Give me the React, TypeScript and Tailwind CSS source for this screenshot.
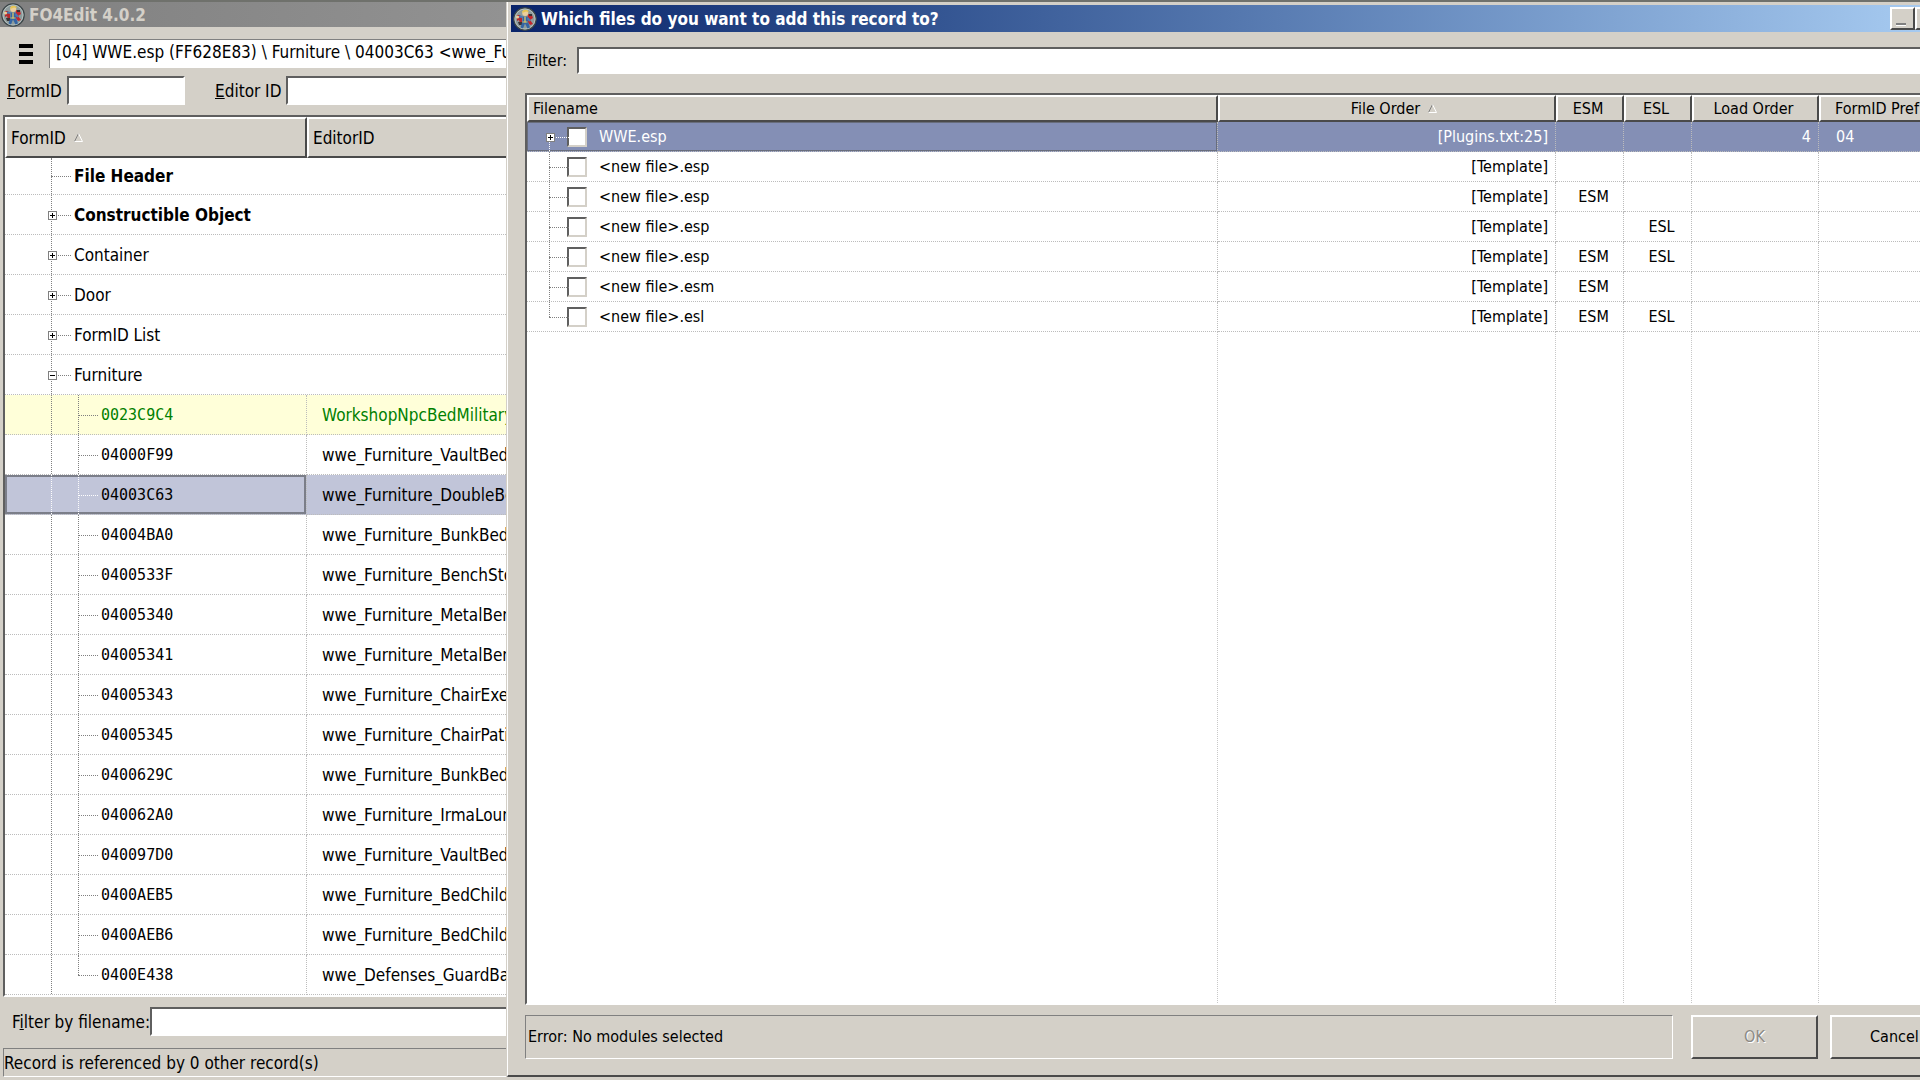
import React from "react";

const mainRows = [
  { label: "File Header", bold: true, expander: "" },
  { label: "Constructible Object", bold: true, expander: "+" },
  { label: "Container", bold: false, expander: "+" },
  { label: "Door", bold: false, expander: "+" },
  { label: "FormID List", bold: false, expander: "+" },
  { label: "Furniture", bold: false, expander: "-" },
];

const records = [
  ["0023C9C4", "WorkshopNpcBedMilitary"],
  ["04000F99", "wwe_Furniture_VaultBed"],
  ["04003C63", "wwe_Furniture_DoubleBe"],
  ["04004BA0", "wwe_Furniture_BunkBed"],
  ["0400533F", "wwe_Furniture_BenchSto"],
  ["04005340", "wwe_Furniture_MetalBen"],
  ["04005341", "wwe_Furniture_MetalBen"],
  ["04005343", "wwe_Furniture_ChairExe"],
  ["04005345", "wwe_Furniture_ChairPati"],
  ["0400629C", "wwe_Furniture_BunkBed"],
  ["040062A0", "wwe_Furniture_IrmaLour"],
  ["040097D0", "wwe_Furniture_VaultBed"],
  ["0400AEB5", "wwe_Furniture_BedChild"],
  ["0400AEB6", "wwe_Furniture_BedChild"],
  ["0400E438", "wwe_Defenses_GuardBa"],
];

const files = [
  { name: "WWE.esp", order: "[Plugins.txt:25]", esm: "", esl: "", load: "4", prefix: "04" },
  { name: "<new file>.esp", order: "[Template]", esm: "", esl: "", load: "", prefix: "" },
  { name: "<new file>.esp", order: "[Template]", esm: "ESM", esl: "", load: "", prefix: "" },
  { name: "<new file>.esp", order: "[Template]", esm: "", esl: "ESL", load: "", prefix: "" },
  { name: "<new file>.esp", order: "[Template]", esm: "ESM", esl: "ESL", load: "", prefix: "" },
  { name: "<new file>.esm", order: "[Template]", esm: "ESM", esl: "", load: "", prefix: "" },
  { name: "<new file>.esl", order: "[Template]", esm: "ESM", esl: "ESL", load: "", prefix: "" },
];

const sunken =
  "border-2 border-t-[#5f5f5f] border-l-[#5f5f5f] border-r-white border-b-white bg-white outline-none";
const raised =
  "border-2 border-t-white border-l-white border-r-[#4a4a4a] border-b-[#4a4a4a] bg-[#d4d0c8]";
const headCell =
  "border-2 border-t-white border-l-white border-r-[#4a4a4a] border-b-[#4a4a4a] bg-[#d4d0c8] font-normal";

function AppIcon() {
  return (
    <svg viewBox="0 0 24 24" className="h-6 w-6 shrink-0" aria-hidden="true">
      <circle cx="12" cy="12" r="11.200" fill="#8d9b9c" stroke="#3a4346" strokeWidth="1.200" />
      <circle cx="12" cy="12" r="10" fill="none" stroke="#b9c4c2" strokeWidth="0.900" />
      <path d="M4 8h3l2 3v5l-2 1-1-4-2 1z" fill="#b5282c" />
      <path d="M5 15h4v3H6z" fill="#3a3436" />
      <path d="M15 7l4 1 1 3-3 2 3 4-3 1-3-4z" fill="#c4262b" />
      <path d="M16 7h3v2h-3z" fill="#3a3436" />
      <path d="M9.500 9.500h5l.5 5 2 6-2.500 1-2.500-5-2 5-2.500-1 2-6z" fill="#3465a4" />
      <path d="M9.500 10L6 9.500M14.500 11l2.500 3" stroke="#4779b4" strokeWidth="2" />
      <path d="M12 9.500v6" stroke="#e9cf62" strokeWidth="1.200" />
      <path d="M9.500 15h5" stroke="#e9cf62" strokeWidth="0.900" />
      <circle cx="4.500" cy="10" r="1.600" fill="#eccf9c" />
      <circle cx="12.200" cy="6" r="3" fill="#eccf9c" />
      <path d="M9 5.500c0-3.500 6.500-4 6.800-.3l-2.800-.7-2.400 1z" fill="#e6c552" />
    </svg>
  );
}

function SortArrow() {
  return (
    <svg viewBox="0 0 9 9" className="h-[9px] w-[9px] shrink-0" aria-hidden="true">
      <path d="M4.500 .5L.5 8.500" stroke="#808080" fill="none" />
      <path d="M4.500 .5L8.500 8.500H.5" stroke="#fff" fill="none" />
    </svg>
  );
}

function Expander({ kind }: { kind: string }) {
  return (
    <button
      type="button"
      aria-label={kind === "+" ? "Expand" : "Collapse"}
      className="absolute top-1/2 left-0 z-10 flex h-[9px] w-[9px] -translate-x-[3px] -translate-y-1 items-center justify-center border border-[#808080] bg-white"
    >
      <span className="absolute h-px w-[5px] bg-black" />
      {kind === "+" && <span className="absolute h-[5px] w-px bg-black" />}
    </button>
  );
}

function Branch({
  start,
  end,
  expander,
  plain,
  light,
}: {
  start?: boolean;
  end?: boolean;
  expander?: string;
  plain?: boolean;
  light?: boolean;
}) {
  const tone = light ? "border-white" : "border-[#808080]";
  const span = start ? "top-1/2 bottom-0" : end ? "top-0 bottom-1/2" : "inset-y-0";
  return (
    <span className="relative w-5 shrink-0 self-stretch">
      <span className={`absolute left-0 border-l border-dotted ${span} ${tone}`} />
      {!plain && <span className={`absolute top-1/2 left-0 w-full border-t border-dotted ${tone}`} />}
      {expander && <Expander kind={expander} />}
    </span>
  );
}

function MainWindow() {
  const cell = "h-10 border-b border-dotted border-[#bcbcbc] p-0";
  return (
    <section className="flex w-[507px] shrink-0 flex-col overflow-hidden border-r border-[#d4d0c8] text-[17px]">
      <header className="flex h-[25px] shrink-0 items-center gap-1 bg-linear-to-r from-[#808080] to-[#929292] pl-px text-[#d4d0c8]">
        <AppIcon />
        <h1 className="font-bold">FO4Edit 4.0.2</h1>
      </header>

      <div className="mt-3 flex shrink-0 items-center pl-[19px]">
        <button type="button" aria-label="Menu" className="mr-4 flex w-[14px] flex-col gap-1">
          <span className="h-1 bg-black" />
          <span className="h-1 bg-black" />
          <span className="h-1 bg-black" />
        </button>
        <input
          aria-label="Record path"
          readOnly
          defaultValue="[04] WWE.esp (FF628E83) \ Furniture \ 04003C63 <wwe_Fu"
          className="h-[29px] min-w-0 flex-1 border-t border-l border-[#808080] bg-white pb-1 pl-1.5 outline-none"
        />
      </div>

      <div className="mt-2 flex shrink-0 items-center pl-[7px]">
        <label htmlFor="formid" className="w-[60px]">
          <u>F</u>ormID
        </label>
        <input id="formid" className={`h-[29px] w-[118px] ${sunken}`} />
        <label htmlFor="editorid" className="ml-[30px] w-[71px] whitespace-nowrap">
          <u>E</u>ditor ID
        </label>
        <input id="editorid" className={`h-[29px] min-w-0 flex-1 border-r-0 ${sunken}`} />
      </div>

      <div className="mt-2.5 ml-[3px] min-h-0 flex-1 overflow-hidden border-t-2 border-b-2 border-l-2 border-t-[#5f5f5f] border-b-white border-l-[#5f5f5f] bg-white">
        <table className="w-full table-fixed border-separate border-spacing-0">
          <colgroup>
            <col className="w-[302px]" />
            <col />
          </colgroup>
          <thead>
            <tr className="h-[41px] text-left">
              <th className={`pl-1 ${headCell}`}>
                <span className="flex items-center gap-2">
                  FormID <SortArrow />
                </span>
              </th>
              <th className="border-t-2 border-b-2 border-l-2 border-t-white border-b-[#4a4a4a] border-l-white bg-[#d4d0c8] pl-1 font-normal">
                EditorID
              </th>
            </tr>
          </thead>
          <tbody>
            {mainRows.map((row, i) => (
              <tr key={row.label}>
                <td colSpan={2} className={i === 0 ? "h-[37px] border-b border-dotted border-[#bcbcbc] p-0" : cell}>
                  <div className={i === 0 ? "flex h-9 items-center pl-[46px]" : "flex h-[39px] items-center pl-[46px]"}>
                    <Branch expander={row.expander} />
                    <span className={row.bold ? "pl-[3px] font-bold" : "pl-[3px]"}>{row.label}</span>
                  </div>
                </td>
              </tr>
            ))}
            {records.map(([id, editor], i) => (
              <tr
                key={id}
                className={i === 0 ? "bg-[#ffffd9] text-[#008000]" : i === 2 ? "bg-[#c1c5d9]" : "bg-white"}
              >
                <td className={`${cell} border-r`}>
                  <div
                    className={
                      i === 2
                        ? "flex h-[39px] items-center pl-[46px] outline-2 -outline-offset-2 outline-[#7b7e89] outline-solid"
                        : "flex h-[39px] items-center pl-[46px]"
                    }
                  >
                    <Branch plain light={i === 2} />
                    <span className="w-[7px]" />
                    <Branch end={i === records.length - 1} light={i === 2} />
                    <span className="pl-[3px] font-['DejaVu_Sans_Mono',monospace] text-[15px]">{id}</span>
                  </div>
                </td>
                <td className={`${cell} pl-[15px] whitespace-nowrap`}>{editor}</td>
              </tr>
            ))}
          </tbody>
        </table>
      </div>

      <div className="mt-2.5 flex shrink-0 items-center pl-3">
        <label htmlFor="byname" className="w-[138px] whitespace-nowrap">
          F<u>i</u>lter by filename:
        </label>
        <input id="byname" className={`h-[29px] min-w-0 flex-1 border-r-0 ${sunken}`} />
      </div>
      <footer className="mt-3 ml-[3px] flex h-[29px] shrink-0 items-center border-t border-b border-l border-t-[#808080] border-b-white border-l-[#808080] whitespace-nowrap">
        Record is referenced by 0 other record(s)
      </footer>
    </section>
  );
}

function AddRecordDialog() {
  const line = "border-b border-dotted border-[#bcbcbc]";
  return (
    <section
      role="dialog"
      aria-label="Which files do you want to add this record to?"
      className="flex min-w-0 flex-1 flex-col overflow-hidden border-b-2 border-l border-b-[#4a4a4a] border-l-white bg-[#d4d0c8] pt-[3px] pl-px"
    >
      <header className="ml-0.5 flex h-[27px] shrink-0 items-center gap-1 bg-linear-to-r from-[#0a246a] to-[#a6caf0] pl-0.5 text-white">
        <AppIcon />
        <h2 className="text-[17px] font-bold">Which files do you want to add this record to?</h2>
        <button
          type="button"
          aria-label="Minimize"
          className={`ml-auto flex h-[23px] w-[25px] items-end pb-0.5 pl-1 ${raised}`}
        >
          <span className="h-[3px] w-2.5 border-b border-white bg-[#808080]" />
        </button>
        <button
          type="button"
          aria-label="Maximize"
          className="-ml-1 h-[23px] w-[5px] border-t-2 border-b-2 border-l-2 border-t-white border-b-[#4a4a4a] border-l-white bg-[#d4d0c8]"
        />
      </header>

      <div className="mt-[15px] flex shrink-0 items-center pl-[18px]">
        <label htmlFor="filter" className="w-[50px]">
          <u>F</u>ilter:
        </label>
        <input id="filter" className={`h-[27px] min-w-0 flex-1 border-r-0 ${sunken}`} />
      </div>

      <div className="mt-[19px] ml-4 min-h-0 flex-1 overflow-hidden border-t-2 border-b-2 border-l-2 border-t-[#5f5f5f] border-b-white border-l-[#5f5f5f] bg-white">
        <table className="h-full w-full table-fixed border-separate border-spacing-0">
          <colgroup>
            <col />
            <col className="w-[338px]" />
            <col className="w-[68px]" />
            <col className="w-[68px]" />
            <col className="w-[127px]" />
            <col className="w-[101px]" />
          </colgroup>
          <thead>
            <tr className="h-[27px]">
              <th className={`pl-1 text-left ${headCell}`}>Filename</th>
              <th className={`pl-3.5 ${headCell}`}>
                <span className="flex items-center justify-center gap-2">
                  File Order <SortArrow />
                </span>
              </th>
              <th className={`pr-1 ${headCell}`}>ESM</th>
              <th className={`pr-1 ${headCell}`}>ESL</th>
              <th className={`pr-1 ${headCell}`}>Load Order</th>
              <th className="overflow-hidden border-t-2 border-b-2 border-l-2 border-t-white border-b-[#4a4a4a] border-l-white bg-[#d4d0c8] pl-3.5 text-left font-normal whitespace-nowrap">
                FormID Pref
              </th>
            </tr>
          </thead>
          <tbody>
            {files.map((file, i) => {
              const on = i === 0;
              const td = `h-[30px] p-0 ${line} border-r`;
              return (
                <tr key={i} className={on ? "bg-[#848fb5] text-white" : "bg-white"}>
                  <td className={td}>
                    <div
                      className={
                        on
                          ? "flex h-[29px] items-center pl-[22px] outline-1 -outline-offset-1 outline-[#686d7c] outline-solid"
                          : "flex h-[29px] items-center pl-[22px]"
                      }
                    >
                      <Branch start={on} end={i === files.length - 1} expander={on ? "+" : ""} light={on} />
                      <input
                        type="checkbox"
                        id={`file-${i}`}
                        className="-ml-0.5 h-5 w-5 shrink-0 appearance-none border-2 border-t-[#5f5f5f] border-r-[#d4d0c8] border-b-[#d4d0c8] border-l-[#5f5f5f] bg-white"
                      />
                      <label htmlFor={`file-${i}`} className="pl-3">
                        {file.name}
                      </label>
                    </div>
                  </td>
                  <td className={`${td} pr-[7px] text-right`}>{file.order}</td>
                  <td className={`${td} pl-2 text-center`}>{file.esm}</td>
                  <td className={`${td} pl-2 text-center`}>{file.esl}</td>
                  <td className={`${td} pr-[7px] text-right`}>{file.load}</td>
                  <td className={`h-[30px] p-0 pl-[17px] ${line}`}>{file.prefix}</td>
                </tr>
              );
            })}
            <tr className="h-full">
              {[0, 1, 2, 3, 4].map((c) => (
                <td key={c} className="border-r border-dotted border-[#c8c8c8] p-0" />
              ))}
              <td className="p-0" />
            </tr>
          </tbody>
        </table>
      </div>

      <footer className="mt-2.5 mb-4 ml-4 flex h-11 shrink-0 gap-[18px]">
        <p className="flex min-w-0 flex-1 items-center border border-t-[#808080] border-r-white border-b-white border-l-[#808080] pl-0.5">
          Error: No modules selected
        </p>
        <div className="flex gap-3">
          <button type="button" disabled className={`w-[127px] text-[#8c8a85] ${raised}`}>
            <span className="[text-shadow:1px_1px_0_#fff]">OK</span>
          </button>
          <button
            type="button"
            className="w-[90px] border-t-2 border-b-2 border-l-2 border-t-white border-b-[#4a4a4a] border-l-white bg-[#d4d0c8] pl-[38px] text-left"
          >
            Cancel
          </button>
        </div>
      </footer>
    </section>
  );
}

export default function App() {
  return (
    <main className="flex h-screen flex-col overflow-hidden border-t-2 border-[#6f716c] bg-[#d4d0c8] pb-[3px] font-['DejaVu_Sans_Condensed','DejaVu_Sans',sans-serif] text-base leading-5 text-black">
      <div className="flex min-h-0 flex-1">
        <MainWindow />
        <AddRecordDialog />
      </div>
    </main>
  );
}
